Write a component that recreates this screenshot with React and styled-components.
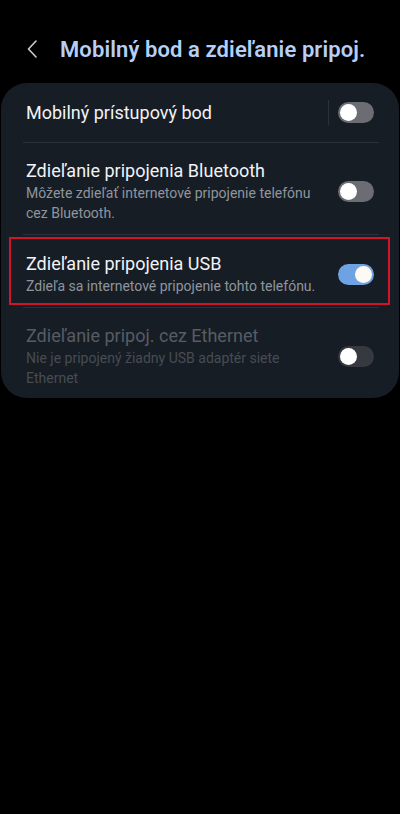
import styled, { createGlobalStyle } from 'styled-components'

const GlobalStyle = createGlobalStyle`
  html, body {
    margin: 0;
    padding: 0;
    background: #000;
  }
  body {
    font-family: Roboto, "Noto Sans", sans-serif;
    -webkit-font-smoothing: antialiased;
  }
`

const Screen = styled.div`
  width: 400px;
  min-height: 814px;
  background: #000;
`

const Header = styled.header`
  display: flex;
  align-items: center;
  height: 34px;
  padding: 32px 0 17px 25px;
`

const BackButton = styled.button`
  display: flex;
  align-items: center;
  justify-content: center;
  width: 14px;
  height: 24px;
  padding: 0;
  margin-right: 21px;
  border: 0;
  background: none;
  color: #c9ccd1;
`

const Title = styled.h1`
  margin: 0;
  font-size: 22px;
  font-weight: 600;
  color: #b5cff6;
  letter-spacing: 0.1px;
`

const Card = styled.section`
  margin: 0 1px;
  background: #171d25;
  border-radius: 26px;
  overflow: hidden;
`

const Row = styled.div`
  position: relative;
  display: flex;
  align-items: center;
  min-height: ${(p) => p.$height}px;
  box-sizing: border-box;
  padding: ${(p) => (p.$single ? '0 25px 0' : '17px 25px 10px')};
`

const RowLine = styled.div`
  position: absolute;
  left: 22px;
  right: 20px;
  top: 0;
  height: 1px;
  background: #2a313a;
`

const TextCol = styled.div`
  flex: 1;
  min-width: 0;
  padding-right: 20px;
`

const ItemTitle = styled.div`
  font-size: 18px;
  line-height: 22px;
  color: ${(p) => (p.$disabled ? '#575c63' : '#f1f3f6')};
`

const ItemSub = styled.div`
  margin-top: 1px;
  font-size: 14px;
  line-height: 20px;
  color: ${(p) => (p.$disabled ? '#474c53' : '#8f959d')};
  max-width: 295px;
`

const VDivider = styled.div`
  width: 1px;
  height: 25px;
  background: #2c323a;
  margin-right: 9px;
`

const Track = styled.div`
  position: relative;
  flex: none;
  width: 36px;
  height: 21px;
  border-radius: 11px;
  background: ${(p) => (p.$on ? '#6ea2e2' : p.$disabled ? '#36393f' : '#6b6d72')};
`

const Knob = styled.div`
  position: absolute;
  top: 2px;
  left: ${(p) => (p.$on ? '17px' : '2px')};
  width: 17px;
  height: 17px;
  border-radius: 50%;
  background: ${(p) => (p.$on ? '#fdfaf3' : '#ffffff')};
`

const Highlight = styled.div`
  position: absolute;
  left: 8px;
  right: 9px;
  top: 3px;
  bottom: 2px;
  border: 2px solid #d3122b;
  pointer-events: none;
`

const Switch = ({ on, disabled }) => (
  <Track $on={on} $disabled={disabled}>
    <Knob $on={on} />
  </Track>
)

const items = [
  { title: 'Mobilný prístupový bod', single: true, divider: true, height: 59 },
  {
    title: 'Zdieľanie pripojenia Bluetooth',
    sub: 'Môžete zdieľať internetové pripojenie telefónu cez Bluetooth.',
    height: 92
  },
  {
    title: 'Zdieľanie pripojenia USB',
    sub: 'Zdieľa sa internetové pripojenie tohto telefónu.',
    on: true,
    marked: true,
    height: 73
  },
  {
    title: 'Zdieľanie pripoj. cez Ethernet',
    sub: 'Nie je pripojený žiadny USB adaptér siete Ethernet',
    disabled: true,
    height: 91
  }
]

const App = () => {
  return (
    <Screen>
      <GlobalStyle />
      <Header>
        <BackButton aria-label='Späť'>
          <svg width='10' height='18' viewBox='0 0 10 18' fill='none'>
            <path d='M9 1L1.5 9L9 17' stroke='currentColor' strokeWidth='1.6' strokeLinecap='round' strokeLinejoin='round' />
          </svg>
        </BackButton>
        <Title>Mobilný bod a zdieľanie pripoj.</Title>
      </Header>
      <Card>
        {items.map((item, i) => (
          <Row key={item.title} $single={item.single} $height={item.height}>
            {i > 0 && <RowLine />}
            <TextCol>
              <ItemTitle $disabled={item.disabled}>{item.title}</ItemTitle>
              {item.sub && <ItemSub $disabled={item.disabled}>{item.sub}</ItemSub>}
            </TextCol>
            {item.divider && <VDivider />}
            <Switch on={item.on} disabled={item.disabled} />
            {item.marked && <Highlight />}
          </Row>
        ))}
      </Card>
    </Screen>
  )
}

export default App
